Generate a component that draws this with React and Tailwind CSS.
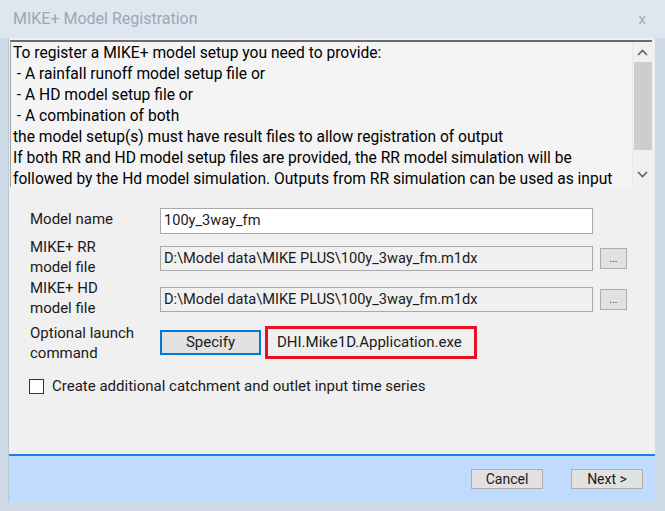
import React from 'react';

const font = { fontFamily: 'Roboto, "Noto Sans", sans-serif' };

const lines = [
  'To register a MIKE+ model setup you need to provide:',
  ' - A rainfall runoff model setup file or',
  ' - A HD model setup file or',
  ' - A combination of both',
  'the model setup(s) must have result files to allow registration of output',
  'If both RR and HD model setup files are provided, the RR model simulation will be',
  'followed by the Hd model simulation. Outputs from RR simulation can be used as input',
];

const Chevron = ({ up }) => (
  <svg width="11" height="7" viewBox="0 0 11 7" className="block">
    <path
      d={up ? 'M1 6 L5.5 1.5 L10 6' : 'M1 1 L5.5 5.5 L10 1'}
      fill="none"
      stroke="#606060"
      strokeWidth="1.6"
    />
  </svg>
);

const FileRow = ({ label1, label2, value, mt }) => (
  <div className={`flex items-center h-[25px] ${mt}`}>
    <div className="w-[151px] pl-[21px] -mt-[3px] leading-[20px] text-[15px] text-[#1a1a1a]">
      <div>{label1}</div>
      <div>{label2}</div>
    </div>
    <div className="w-[433px] h-[25px] border border-[#a9a9a9] bg-[#f0f0f0] flex items-center pl-[3px] text-[14.6px] text-[#1a1a1a]">
      {value}
    </div>
    <button className="ml-[7px] w-[27px] h-[21px] bg-[#e1e1e1] border border-[#adadad] text-[10px] leading-none flex items-end justify-center pb-[4px] text-[#333]">
      ...
    </button>
  </div>
);

export default function App() {
  return (
    <div className="w-[665px] h-[511px] bg-[#cfdae7] flex flex-col overflow-hidden" style={font}>
      {/* title bar */}
      <div className="h-[38px] bg-[#dee6ef] flex items-center justify-between pl-[13px] pr-[19px] shrink-0">
        <span className="text-[16px] text-[#9ca7b7]">MIKE+ Model Registration</span>
        <span className="text-[15px] text-[#a0a8b4]">x</span>
      </div>

      {/* client */}
      <div className="ml-[8px] mr-[10px] flex-1 bg-[#f0f0f0] flex flex-col border-l border-[#bcc6d2]">
        {/* description */}
        <div className="mt-[2px] ml-[1px] mr-[3px] h-[147px] flex border-t-2 border-t-[#6a6a6a] border-l border-l-[#a0a0a0] bg-[#f4f4f4]">
          <div className="flex-1 overflow-hidden pl-[2px] pt-[1px] text-[15.6px] leading-[21px] text-black">
            {lines.map((l, i) => (
              <div key={i} className="whitespace-pre">{l}</div>
            ))}
          </div>
          <div className="w-[20px] bg-[#f0f0f0] border-l border-[#e8e8e8] flex flex-col items-center">
            <div className="h-[20px] flex items-center justify-center">
              <Chevron up />
            </div>
            <div className="w-[18px] h-[88px] bg-[#cdcdcd]" />
            <div className="flex-1 flex items-start justify-center pt-[21px]">
              <Chevron />
            </div>
          </div>
        </div>

        {/* model name */}
        <div className="flex items-center h-[26px] mt-[21px]">
          <div className="w-[151px] pl-[21px] -mt-[3px] text-[15px] text-[#1a1a1a]">Model name</div>
          <div className="w-[433px] h-[26px] border border-[#a9a9a9] bg-white flex items-center pl-[3px] text-[14.6px] text-[#1a1a1a]">
            100y_3way_fm
          </div>
        </div>

        <FileRow mt="mt-[12px]" label1="MIKE+ RR" label2="model file" value="D:\Model data\MIKE PLUS\100y_3way_fm.m1dx" />
        <FileRow mt="mt-[16px]" label1="MIKE+ HD" label2="model file" value="D:\Model data\MIKE PLUS\100y_3way_fm.m1dx" />

        {/* launch command */}
        <div className="flex items-center h-[33px] mt-[14px]">
          <div className="w-[151px] pl-[21px] leading-[20px] text-[15px] text-[#1a1a1a]">
            <div>Optional launch</div>
            <div>command</div>
          </div>
          <button className="w-[101px] h-[25px] bg-[#e1e1e1] border-2 border-[#0078d7] text-[15px] text-[#1a1a1a] flex items-center justify-center">
            Specify
          </button>
          <div className="ml-[4px] w-[212px] h-[33px] border-[3px] border-[#e81123] flex items-center pl-[9px] text-[15px] text-[#1a1a1a]">
            DHI.Mike1D.Application.exe
          </div>
        </div>

        {/* checkbox */}
        <div className="flex items-center h-[15px] mt-[20px] pl-[20px]">
          <div className="w-[15px] h-[15px] border border-[#333] bg-white" />
          <span className="ml-[8px] text-[15px] text-[#1a1a1a]">Create additional catchment and outlet input time series</span>
        </div>

        <div className="flex-1" />

        {/* footer */}
        <div className="h-[48px] border-t-2 border-[#1a7fe6] bg-[#c0dcfc] flex justify-end items-start pt-[13px] pr-[12px] gap-[28px]">
          <button className="w-[72px] h-[20px] bg-[#e1e1e1] border border-[#adadad] text-[14px] text-[#1a1a1a] flex items-center justify-center">
            Cancel
          </button>
          <button className="w-[72px] h-[20px] bg-[#e1e1e1] border border-[#adadad] text-[14px] text-[#1a1a1a] flex items-center justify-center">
            Next &gt;
          </button>
        </div>
      </div>
      <div className="h-[9px] shrink-0" />
    </div>
  );
}
